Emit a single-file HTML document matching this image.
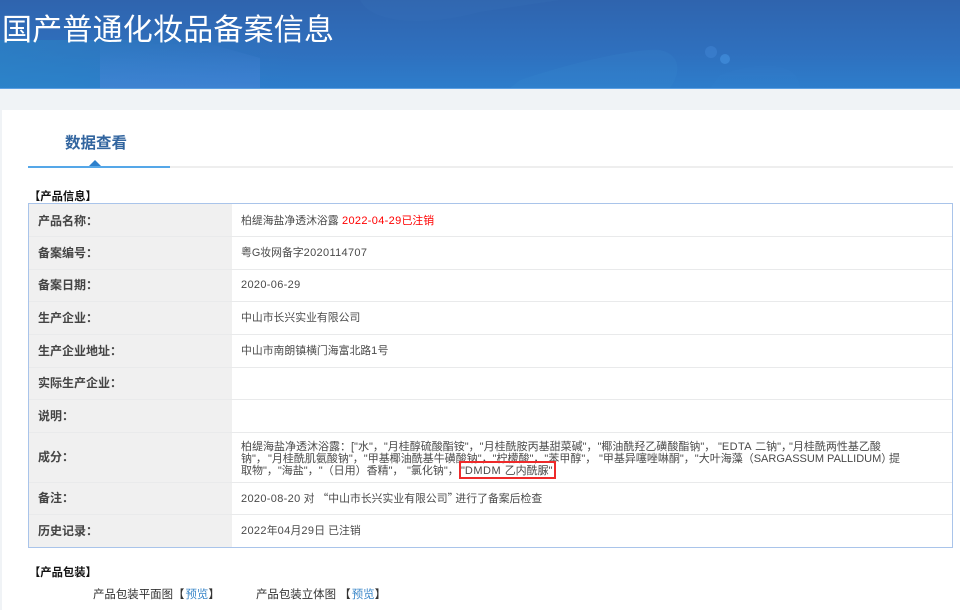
<!DOCTYPE html>
<html lang="zh"><head><meta charset="utf-8"><style>
html,body{margin:0;padding:0;width:960px;height:610px;overflow:hidden;background:#fff}
body{position:relative;font-family:"Liberation Sans","Noto Sans CJK SC",sans-serif;color:#444}
div,svg{position:absolute}
.t{white-space:nowrap;font-size:10.85px;line-height:14px;color:#4a4a4a;filter:blur(.25px)}
.i{font-size:11px}
.n{font-size:11px;letter-spacing:.33px}
.q{font-family:"Noto Sans CJK SC",sans-serif}
.l{left:38px;font-size:12px;font-weight:bold;color:#444;white-space:nowrap;line-height:14px;filter:blur(.25px)}
.h{position:absolute;left:29px;width:923px;height:1px;background:#e9eaeb}
.b{font-size:11.3px;font-weight:bold;color:#111}
.p{font-size:11.45px;color:#333}
</style></head><body>
<div style="left:0;top:0;width:960px;height:88px;background:linear-gradient(180deg,#2f64ae 0%,#2f70be 60%,#2d7dcb 100%)"></div>
<div style="left:0;top:40px;width:300px;height:48px;background:linear-gradient(90deg,rgba(42,136,200,.55),rgba(42,136,200,.15) 70%,rgba(42,136,200,0))"></div>
<svg style="left:0;top:0" width="960" height="88" viewBox="0 0 960 88">
<defs><linearGradient id="g" x1="0" y1="0" x2="0" y2="1"><stop offset="0" stop-color="#4a84d6" stop-opacity=".04"/><stop offset="1" stop-color="#4a84d6" stop-opacity=".6"/></linearGradient></defs>
<path d="M100 44 L210 44 L260 58 L260 88 L100 88Z" fill="url(#g)"/>
<path d="M360 0 C370 22 420 28 480 12 L560 0Z" fill="#4a8ad0" opacity=".08"/>
<path d="M520 80 C580 60 640 48 660 50 C680 54 682 72 670 88 L510 88Z" fill="#3f92d8" opacity=".14"/>
<circle cx="711" cy="52" r="6" fill="#4a90e0" opacity=".35"/><circle cx="725" cy="59" r="5" fill="#4a9ae8" opacity=".5"/>
<path d="M720 75 C760 60 800 62 800 88 L710 88Z" fill="#3f92d8" opacity=".08"/>
</svg>
<div style="left:0;top:88px;width:960px;height:1px;background:#5b9fe2"></div>
<div style="left:0;top:89px;width:960px;height:21px;background:#f0f3f6"></div>
<div style="left:0;top:110px;width:2px;height:500px;background:#f0f3f6"></div>
<div class="t" style="left:2px;top:10px;font-size:30px;letter-spacing:.2px;line-height:42px;color:#fff">国产普通化妆品备案信息</div>
<div class="t" style="left:65px;top:135px;font-size:15.5px;line-height:18px;font-weight:bold;color:#32659f">数据查看</div>
<div style="left:170px;top:166px;width:783px;height:2px;background:#eeeeee"></div>
<div style="left:28px;top:166px;width:142px;height:2px;background:#55a7e8"></div>
<svg style="left:89px;top:160px" width="12" height="6"><path d="M0 6 L6 0 L12 6Z" fill="#2d80cc"/></svg>
<div class="t b" style="left:29px;top:190px">【产品信息】</div>

<div style="left:28px;top:203px;width:923px;height:343px;border:1px solid #a9c4ea"></div>
<div style="left:29px;top:204px;width:203px;height:343px;background:#f0f0f0"></div>
<div class="h" style="top:236px"></div><div class="h" style="top:269px"></div><div class="h" style="top:301px"></div><div class="h" style="top:334px"></div><div class="h" style="top:367px"></div><div class="h" style="top:399px"></div><div class="h" style="top:432px"></div><div class="h" style="top:482px"></div><div class="h" style="top:514px"></div>

<div class="l" style="top:214px">产品名称：</div>
<div class="l" style="top:246px">备案编号：</div>
<div class="l" style="top:278px">备案日期：</div>
<div class="l" style="top:311px">生产企业：</div>
<div class="l" style="top:344px">生产企业地址：</div>
<div class="l" style="top:376px">实际生产企业：</div>
<div class="l" style="top:409px">说明：</div>
<div class="l" style="top:450px">成分：</div>
<div class="l" style="top:491px">备注：</div>
<div class="l" style="top:524px">历史记录：</div>

<div class="t" style="left:241px;top:214px">柏缇海盐净透沐浴露</div>
<div class="t" style="left:342px;top:214px;color:#f00"><span class="n">2022-04-29</span>已注销</div>
<div class="t" style="left:241px;top:246px">粤G妆网备字<span class="n">2020114707</span></div>
<div class="t" style="left:241px;top:278px"><span class="n">2020-06-29</span></div>
<div class="t" style="left:241px;top:311px">中山市长兴实业有限公司</div>
<div class="t" style="left:241px;top:344px">中山市南朗镇横门海富北路<span class="n">1</span>号</div>
<div class="t i" style="left:241px;top:440px">柏缇海盐净透沐浴露：["水"，"月桂醇硫酸酯铵"，"月桂酰胺丙基甜菜碱"，"椰油酰羟乙磺酸酯钠"，</div>
<div class="t i" style="left:718px;top:440px">"<span style="letter-spacing:.4px">EDTA</span> 二钠"，</div>
<div class="t i" style="left:789px;top:440px">"月桂酰两性基乙酸</div>
<div class="t i" style="left:241px;top:452px">钠"，</div>
<div class="t i" style="left:268px;top:452px">"月桂酰肌氨酸钠"，"甲基椰油酰基牛磺酸钠"，"柠檬酸"，"苯甲醇"，</div>
<div class="t i" style="left:599px;top:452px">"甲基异噻唑啉酮"，"大叶海藻（SARGASSUM PALLIDUM）</div>
<div class="t i" style="left:889px;top:452px">提</div>
<div class="t i" style="left:241px;top:464px">取物"，"海盐"，"（日用）香精"，</div>
<div class="t i" style="left:407px;top:464px">"氯化钠"，</div>
<div class="t i" style="left:461px;top:464px">"<span style="letter-spacing:.5px">DMDM </span>乙内酰脲"</div>
<div style="left:459px;top:461px;width:93px;height:14px;border:2px solid #ee2a2a"></div>
<div class="t" style="left:241px;top:491px"><span class="n">2020-08-20</span> 对 <span class="q">“</span>中山市长兴实业有限公司<span class="q" style="margin-right:-3px">”</span>进行了备案后检查</div>
<div class="t" style="left:241px;top:524px"><span class="n">2022</span>年<span class="n">04</span>月<span class="n">29</span>日 已注销</div>

<div class="t b" style="left:29px;top:566px">【产品包装】</div>
<div class="t p" style="left:93px;top:588px">产品包装平面图【<span style="color:#3b87c9;margin-left:1px">预览</span>】</div>
<div class="t p" style="left:256px;top:588px">产品包装立体图 【<span style="color:#3b87c9;margin-left:1px">预览</span>】</div>
</body></html>
